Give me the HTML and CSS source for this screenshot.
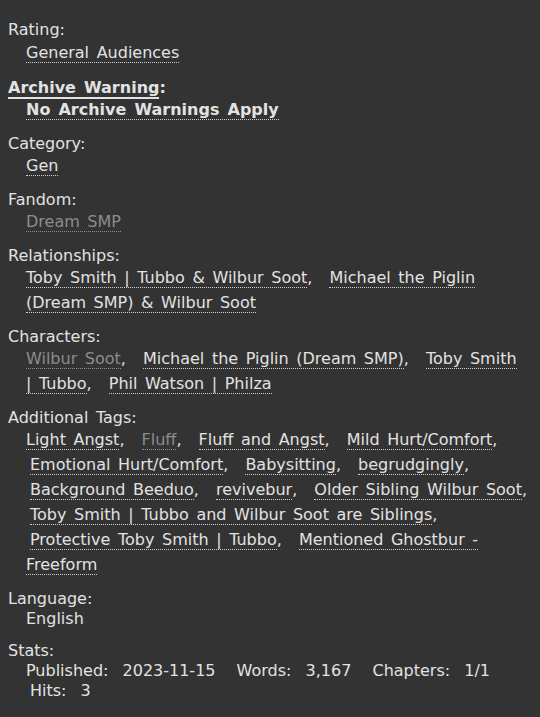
FILE: index.html
```html
<!DOCTYPE html>
<html>
<head>
<meta charset="utf-8">
<link rel="stylesheet" href="styles.css">
</head>
<body>
<dl class="meta">
  <dt>Rating:</dt>
  <dd class="first"><ul class="tags"><li><a class="tag">General Audiences</a></li></ul></dd>

  <dt class="warning"><span class="warn-label">Archive Warning</span>:</dt>
  <dd class="warning"><ul class="tags"><li><a class="tag">No Archive Warnings Apply</a></li></ul></dd>

  <dt>Category:</dt>
  <dd><ul class="tags"><li><a class="tag">Gen</a></li></ul></dd>

  <dt>Fandom:</dt>
  <dd><ul class="tags"><li><a class="tag dim">Dream SMP</a></li></ul></dd>

  <dt>Relationships:</dt>
  <dd><ul class="tags"><li><a class="tag">Toby Smith | Tubbo &amp; Wilbur Soot</a>,</li> <li><a class="tag">Michael the Piglin (Dream SMP) &amp; Wilbur Soot</a></li></ul></dd>

  <dt>Characters:</dt>
  <dd><ul class="tags"><li><a class="tag dim">Wilbur Soot</a>,</li> <li><a class="tag">Michael the Piglin (Dream SMP)</a>,</li> <li><a class="tag">Toby Smith | Tubbo</a>,</li> <li><a class="tag">Phil Watson | Philza</a></li></ul></dd>

  <dt>Additional Tags:</dt>
  <dd><ul class="tags"><li><a class="tag">Light Angst</a>,</li> <li><a class="tag dim">Fluff</a>,</li> <li><a class="tag">Fluff and Angst</a>,</li> <li><a class="tag">Mild Hurt/Comfort</a>,</li> <li><a class="tag">Emotional Hurt/Comfort</a>,</li> <li><a class="tag">Babysitting</a>,</li> <li><a class="tag">begrudgingly</a>,</li> <li><a class="tag">Background Beeduo</a>,</li> <li><a class="tag">revivebur</a>,</li> <li><a class="tag">Older Sibling Wilbur Soot</a>,</li> <li><a class="tag">Toby Smith | Tubbo and Wilbur Soot are Siblings</a>,</li> <li><a class="tag">Protective Toby Smith | Tubbo</a>,</li> <li><a class="tag">Mentioned Ghostbur - Freeform</a></li></ul></dd>

  <dt>Language:</dt>
  <dd class="plain">English</dd>

  <dt>Stats:</dt>
  <dd class="plain stats"><span class="stat"><span class="k">Published:</span> <span class="v">2023-11-15</span></span> <span class="stat"><span class="k">Words:</span> <span class="v">3,167</span></span> <span class="stat"><span class="k">Chapters:</span> <span class="v">1/1</span></span> <span class="stat"><span class="k">Hits:</span> <span class="v">3</span></span></dd>
</dl>
</body>
</html>
```

FILE: styles.css
```css
html, body {
  margin: 0;
  background: #333333;
}
body {
  padding: 20px 12px 0 8px;
  font-family: "DejaVu Sans", Verdana, sans-serif;
  font-size: 16px;
  color: #e2e2e2;
  word-spacing: 2.5px;
}
.meta {
  margin: 0;
}
.meta dt {
  line-height: 20px;
  margin: 0;
}
.meta dd {
  margin: 0 0 12px 18px;
  line-height: 20px;
}
.meta dd.first {
  margin-bottom: 13px;
}
.meta dt.warning {
  font-weight: bold;
}
.warn-label {
  border-bottom: 2px solid #e2e2e2;
}
.meta dd.warning {
  font-weight: bold;
}
.tags {
  list-style: none;
  margin: -1px 0 0 0;
  padding: 0;
  line-height: 25px;
  word-spacing: 8px;
}
.first .tags {
  margin-top: 0;
}
.tags li {
  display: inline;
  word-spacing: 2.5px;
}
.tags li + li {
  margin-left: 4px;
}
.tag {
  color: #e2e2e2;
  text-decoration: none;
  border-bottom: 1px dotted #d0d0d0;
}
.tag.dim {
  color: #8c8c8c;
  border-bottom-color: #8c8c8c;
}
.stats {
  line-height: 21px;
  word-spacing: 12px;
}
.stat {
  word-spacing: 9px;
}
.stat + .stat {
  margin-left: 4px;
}
```
